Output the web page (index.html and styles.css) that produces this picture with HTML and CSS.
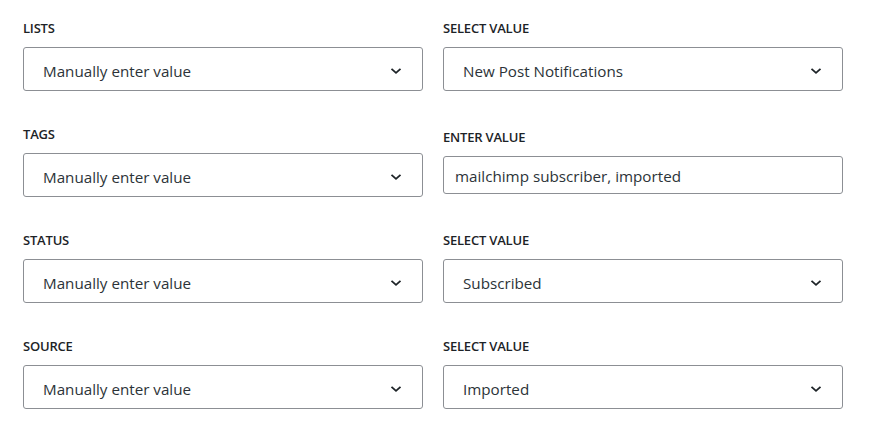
FILE: index.html
```html
<!DOCTYPE html>
<html lang="en">
<head>
<meta charset="utf-8">
<title>Field mapping</title>
<link rel="stylesheet" href="styles.css">
</head>
<body>
<div class="mapping">
  <div class="row">
    <div class="field">
      <label class="label">LISTS</label>
      <div class="select"><span class="value">Manually enter value</span><svg class="chev" width="12" height="8" viewBox="0 0 12 8"><path d="M1.5 1.8 L6 5.8 L10.5 1.8" fill="none" stroke="#1d2327" stroke-width="1.8"/></svg></div>
    </div>
    <div class="field">
      <label class="label">SELECT VALUE</label>
      <div class="select"><span class="value">New Post Notifications</span><svg class="chev" width="12" height="8" viewBox="0 0 12 8"><path d="M1.5 1.8 L6 5.8 L10.5 1.8" fill="none" stroke="#1d2327" stroke-width="1.8"/></svg></div>
    </div>
  </div>
  <div class="row">
    <div class="field">
      <label class="label">TAGS</label>
      <div class="select"><span class="value">Manually enter value</span><svg class="chev" width="12" height="8" viewBox="0 0 12 8"><path d="M1.5 1.8 L6 5.8 L10.5 1.8" fill="none" stroke="#1d2327" stroke-width="1.8"/></svg></div>
    </div>
    <div class="field">
      <label class="label">ENTER VALUE</label>
      <div class="input"><span class="value">mailchimp subscriber, imported</span></div>
    </div>
  </div>
  <div class="row">
    <div class="field">
      <label class="label">STATUS</label>
      <div class="select"><span class="value">Manually enter value</span><svg class="chev" width="12" height="8" viewBox="0 0 12 8"><path d="M1.5 1.8 L6 5.8 L10.5 1.8" fill="none" stroke="#1d2327" stroke-width="1.8"/></svg></div>
    </div>
    <div class="field">
      <label class="label">SELECT VALUE</label>
      <div class="select"><span class="value">Subscribed</span><svg class="chev" width="12" height="8" viewBox="0 0 12 8"><path d="M1.5 1.8 L6 5.8 L10.5 1.8" fill="none" stroke="#1d2327" stroke-width="1.8"/></svg></div>
    </div>
  </div>
  <div class="row">
    <div class="field">
      <label class="label">SOURCE</label>
      <div class="select"><span class="value">Manually enter value</span><svg class="chev" width="12" height="8" viewBox="0 0 12 8"><path d="M1.5 1.8 L6 5.8 L10.5 1.8" fill="none" stroke="#1d2327" stroke-width="1.8"/></svg></div>
    </div>
    <div class="field">
      <label class="label">SELECT VALUE</label>
      <div class="select"><span class="value">Imported</span><svg class="chev" width="12" height="8" viewBox="0 0 12 8"><path d="M1.5 1.8 L6 5.8 L10.5 1.8" fill="none" stroke="#1d2327" stroke-width="1.8"/></svg></div>
    </div>
  </div>
</div>
</body>
</html>
```
FILE: styles.css
```css
html, body {
  margin: 0;
  padding: 0;
  background: #ffffff;
}
body {
  font-family: "Open Sans", "Noto Sans", "Liberation Sans", sans-serif;
  color: #2c3338;
}
.mapping {
  padding: 18px 0 0 23px;
  display: flex;
  flex-direction: column;
  gap: 33px;
}
.row {
  display: grid;
  grid-template-columns: 400px 400px;
  column-gap: 20px;
  align-items: center;
}
.field {
  display: flex;
  flex-direction: column;
}
.label {
  font-size: 13px;
  line-height: 20px;
  font-weight: 600;
  color: #1d2327;
  margin-bottom: 9px;
  letter-spacing: -0.2px;
}
.select, .input {
  box-sizing: border-box;
  border: 1px solid #8c8f94;
  border-radius: 3px;
  display: flex;
  align-items: center;
  background: #fff;
}
.select {
  height: 44px;
  padding: 3px 20px 0 19px;
  justify-content: space-between;
}
.input {
  height: 38px;
  padding: 2px 11px 0;
}
.value {
  font-size: 15.2px;
  color: #2c3338;
}
.chev {
  display: block;
  flex: none;
}
```
